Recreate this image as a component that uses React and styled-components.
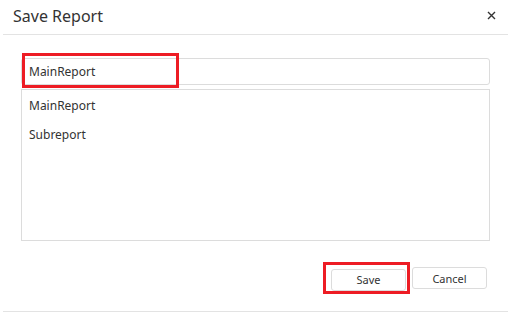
import React from "react";
import styled, { createGlobalStyle } from "styled-components";

const GlobalStyle = createGlobalStyle`
  html, body {
    margin: 0;
    padding: 0;
    background: #fff;
  }
  body {
    font-family: "Segoe UI", "Noto Sans", "Open Sans", sans-serif;
    color: #333;
  }
`;

const items = ["MainReport", "Subreport"];

export default function App() {
  return (
    <>
      <GlobalStyle />
      <Dialog>
        <Header>
          <Title>Save Report</Title>
          <CloseButton aria-label="Close">
            <svg width="9" height="9" viewBox="0 0 9 9">
              <path d="M1 1L8 8M8 1L1 8" stroke="#333" strokeWidth="1.4" />
            </svg>
          </CloseButton>
        </Header>
        <Body>
          <InputWrap>
            <NameInput defaultValue="MainReport" />
            <Highlight $left={1} $top={-5} $width={157} $height={35} />
          </InputWrap>
          <ReportList>
            {items.map((item) => (
              <ReportItem key={item}>{item}</ReportItem>
            ))}
          </ReportList>
        </Body>
        <Footer>
          <ButtonWrap>
            <Button>Save</Button>
            <Highlight $left={-8} $top={-5} $width={87} $height={32} />
          </ButtonWrap>
          <Button>Cancel</Button>
        </Footer>
      </Dialog>
    </>
  );
}

const Dialog = styled.div`
  width: 508px;
  height: 312px;
  background: #fff;
  overflow: hidden;
`;

const Header = styled.div`
  display: flex;
  align-items: center;
  justify-content: space-between;
  height: 34px;
  margin-left: 3px;
  padding: 0 11px 0 10px;
  border-bottom: 1px solid #e3e3e3;
`;

const Title = styled.div`
  font-size: 16px;
  color: #333;
  margin-top: -2px;
`;

const CloseButton = styled.button`
  display: flex;
  align-items: center;
  justify-content: center;
  width: 12px;
  height: 12px;
  padding: 0;
  margin-top: -4px;
  border: none;
  background: none;
  cursor: pointer;
`;

const Body = styled.div`
  padding: 23px 18px 0 21px;
`;

const InputWrap = styled.div`
  position: relative;
`;

const NameInput = styled.input`
  display: block;
  box-sizing: border-box;
  width: 100%;
  height: 27px;
  padding: 0 7px;
  border: 1px solid #dcdcdc;
  border-radius: 3px;
  font-family: inherit;
  font-size: 12px;
  color: #333;
  outline: none;
`;

const Highlight = styled.div`
  position: absolute;
  left: ${(p) => p.$left}px;
  top: ${(p) => p.$top}px;
  width: ${(p) => p.$width}px;
  height: ${(p) => p.$height}px;
  box-sizing: border-box;
  border: 3px solid #ed1c24;
  pointer-events: none;
`;

const ReportList = styled.div`
  box-sizing: border-box;
  height: 152px;
  margin-top: 4px;
  padding-top: 1px;
  border: 1px solid #dcdcdc;
`;

const ReportItem = styled.div`
  height: 29px;
  line-height: 29px;
  padding-left: 7px;
  font-size: 12px;
  color: #333;
`;

const Footer = styled.div`
  display: flex;
  justify-content: flex-end;
  gap: 6px;
  box-sizing: border-box;
  height: 71px;
  margin-left: 3px;
  padding: 26px 21px 0 0;
  border-bottom: 1px solid #e3e3e3;
`;

const ButtonWrap = styled.div`
  position: relative;
  height: 22px;
`;

const Button = styled.button`
  box-sizing: border-box;
  width: 75px;
  height: 22px;
  padding: 0;
  border: 1px solid #dcdcdc;
  border-radius: 3px;
  background: #fff;
  font-family: inherit;
  font-size: 11px;
  color: #333;
  cursor: pointer;
`;
